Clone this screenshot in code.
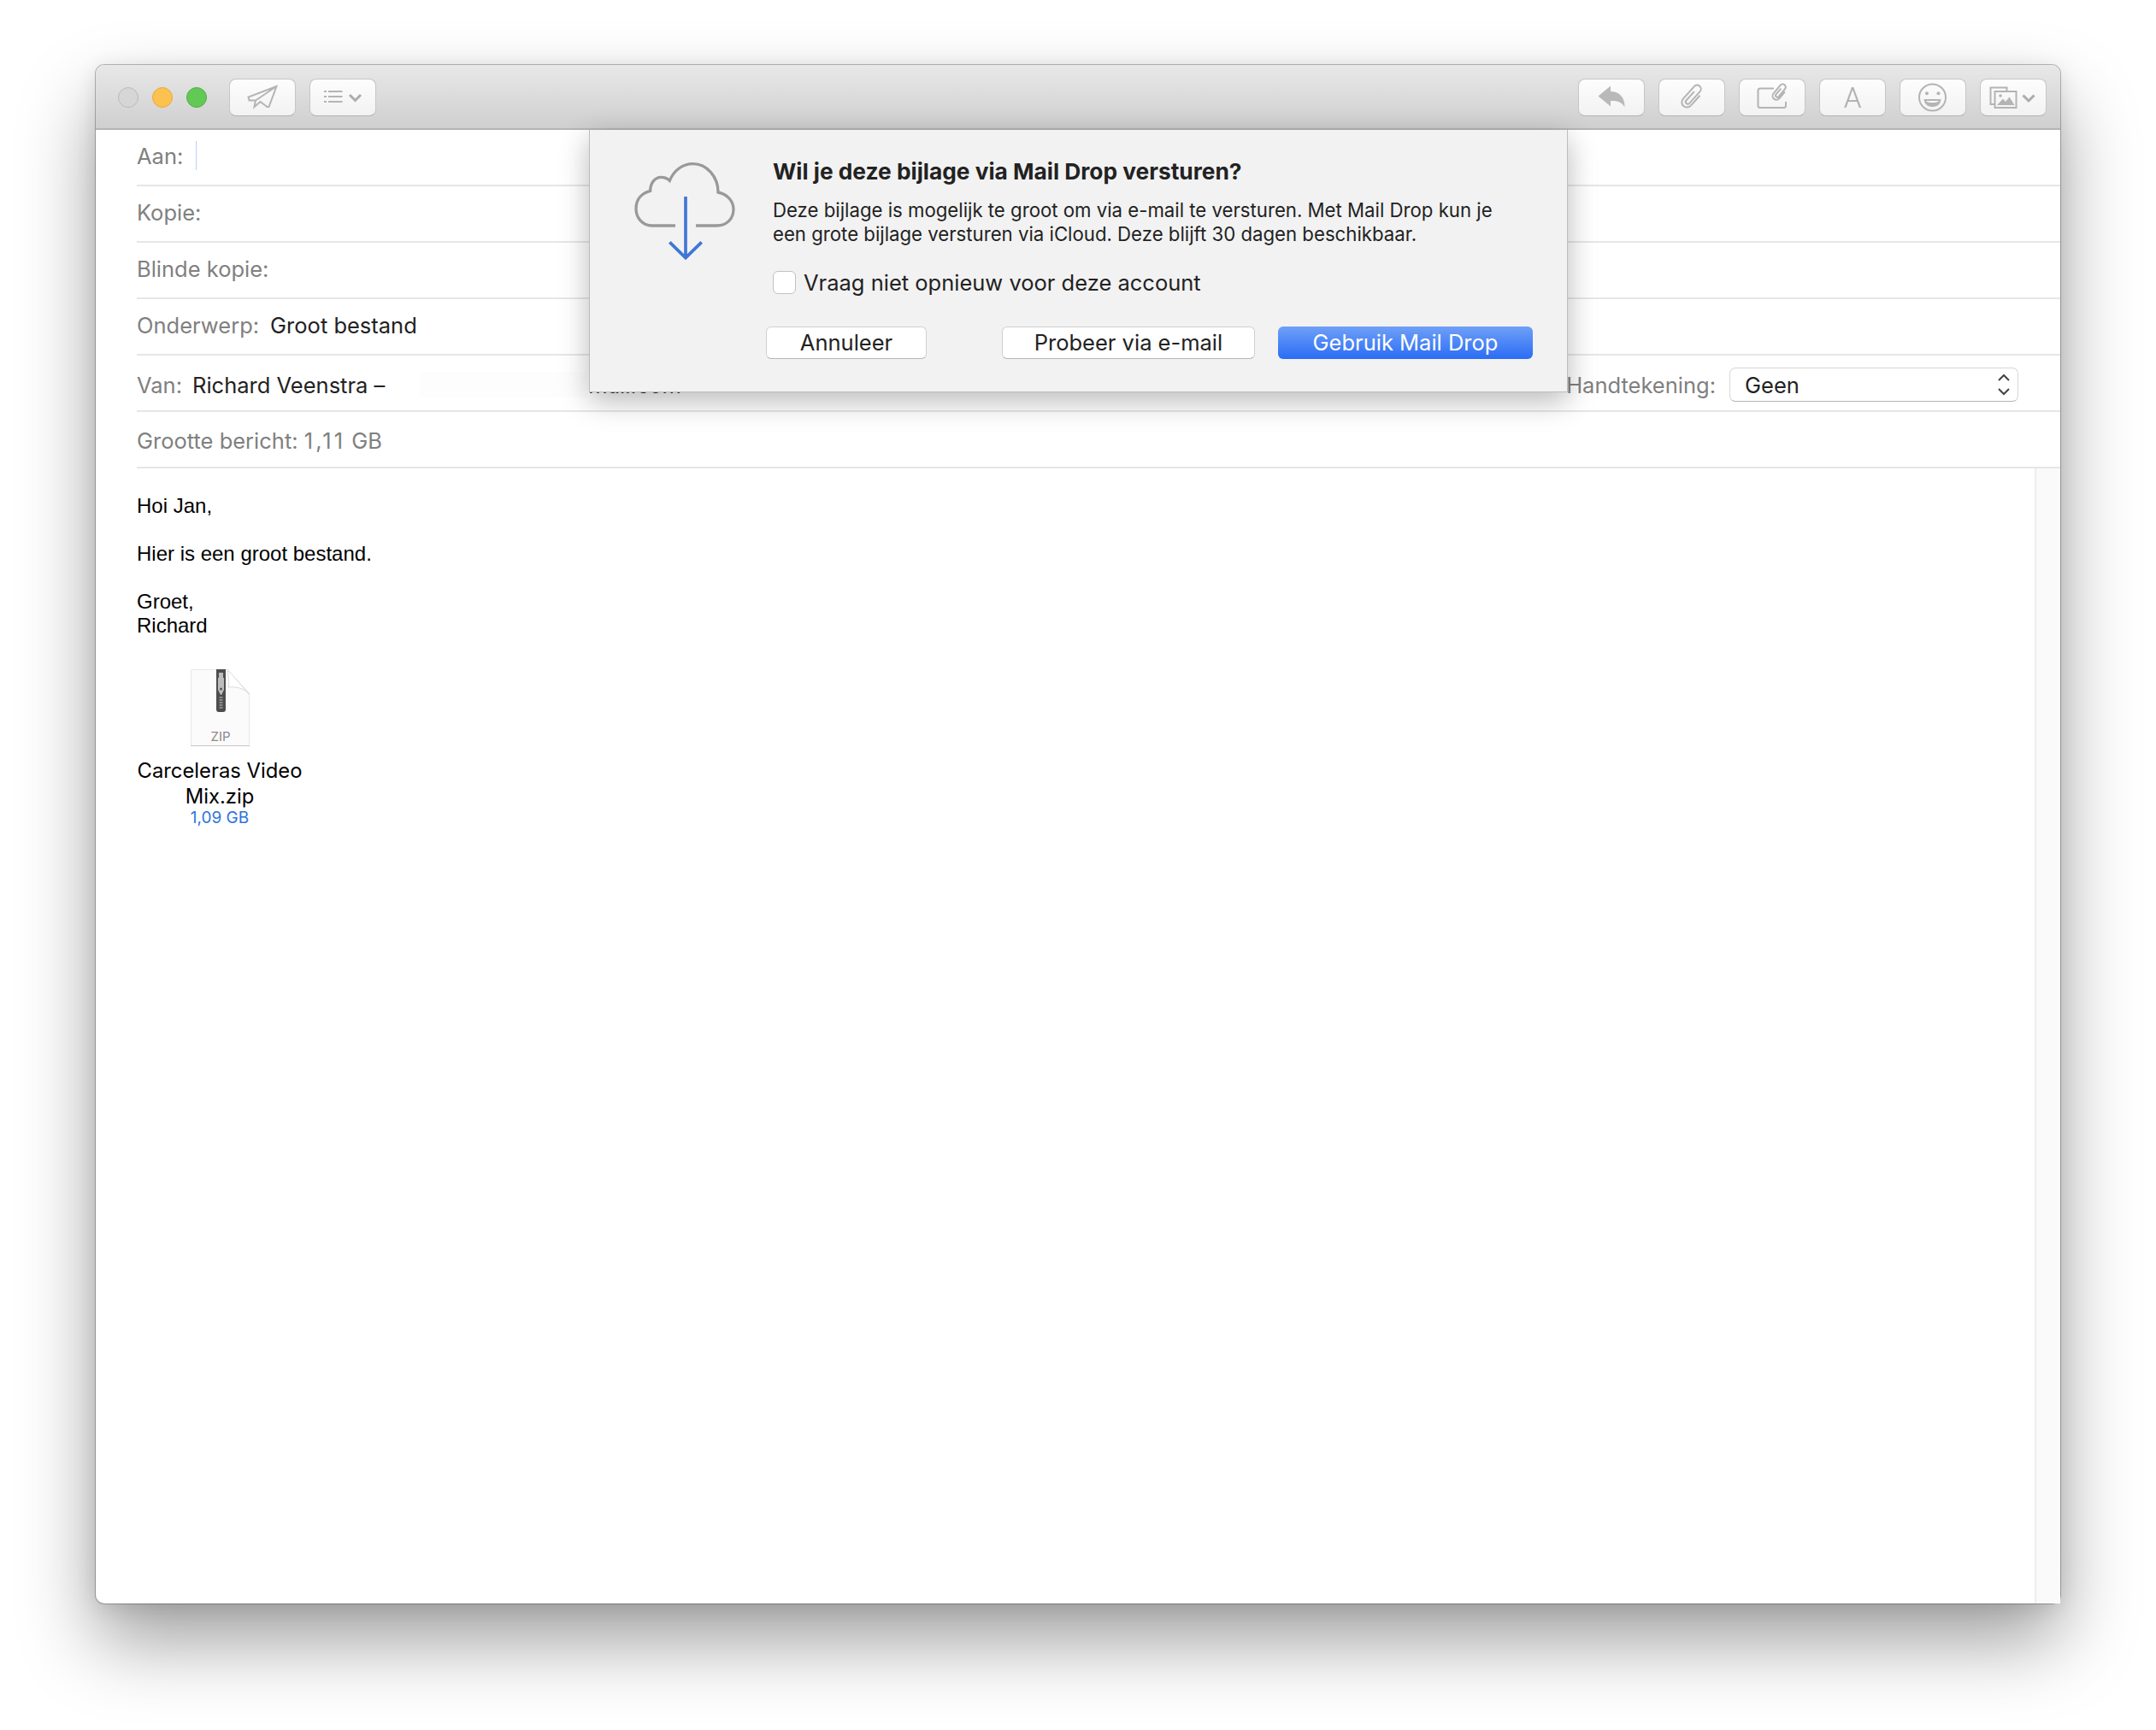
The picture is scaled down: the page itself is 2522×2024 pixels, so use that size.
<div class="page">
  <div class="window">
    <header class="titlebar">
      <div class="lights">
        <span class="light grey"></span>
        <span class="light yellow"></span>
        <span class="light green"></span>
      </div>
      <button class="tool">
        <svg viewBox="0 0 78 44" class="line">
          <path d="M55.500 9 22.500 21.500 23.500 25.500H31L29.500 33 36.500 27 44.500 33H46.500ZM55.500 9 31 25.500" />
        </svg>
      </button>
      <button class="tool">
        <svg viewBox="0 0 78 44" class="line">
          <path d="M17 15h3M22 15h16.500M17 21h3M22 21h16.500M17 27h3M22 27h16.500" />
          <path d="M47 19l6.500 6.500 6.500-6.500" class="chev" />
        </svg>
      </button>
      <div class="spacer"></div>
      <button class="tool">
        <svg viewBox="0 0 78 44">
          <path d="M23.500 20.500 38 8.500V15C48 15 55 22 54.500 33.500 51 27 46 25.500 38 26V32.500Z" fill="#b9b9b9" />
        </svg>
      </button>
      <button class="tool">
        <svg viewBox="0 0 78 44" class="line">
          <path transform="rotate(42 39 22)" d="M36.500 15V29a2.500 2.500 0 0 0 5 0V10.500a4.500 4.500 0 0 0-9 0V30a6 6 0 0 0 12 0V14" />
        </svg>
      </button>
      <button class="tool">
        <svg viewBox="0 0 78 44" class="line">
          <path d="M41 11.500H25a2.500 2.500 0 0 0-2.500 2.500V31.500a2.500 2.500 0 0 0 2.500 2.500H52.500a2.500 2.500 0 0 0 2.500-2.500V27" />
          <path transform="rotate(40 48 17)" d="M45.500 12V21a2 2 0 0 0 4 0V9.500a3.500 3.500 0 0 0-7 0V22a4.500 4.500 0 0 0 9 0V12" />
        </svg>
      </button>
      <button class="tool"><span class="glyph">A</span></button>
      <button class="tool">
        <svg viewBox="0 0 78 44" class="line">
          <ellipse cx="38.500" cy="22" rx="15.500" ry="15.500" />
          <circle cx="32" cy="17.300" r="2" fill="#b4b4b4" />
          <circle cx="45.500" cy="17.300" r="2" fill="#b4b4b4" />
          <path class="solid" d="M28.500 24H48.500C48 30 44 33 38.500 33S29 30 28.500 24Z" />
          <path class="teeth" d="M31 26H46C45 27.500 42 28 38.500 28S32 27.500 31 26Z" />
        </svg>
      </button>
      <button class="tool">
        <svg viewBox="0 0 78 44" class="line">
          <path d="M17 30H12.500V10.500H31.500V15" />
          <rect x="17.500" y="15" width="25" height="19" />
          <circle cx="24" cy="20" r="1.800" fill="#b4b4b4" />
          <path class="solid" d="M20 31 27 23.500 30 27 34.500 21.500 40.500 31Z" />
          <path class="chev" d="M50.500 19.500l6.500 6.500 6.500-6.500" />
        </svg>
      </button>
    </header>

    <div class="fields">
      <div class="row">
        <span class="label">Aan:</span>
        <span class="caret"></span>
      </div>
      <div class="row"><span class="label">Kopie:</span></div>
      <div class="row"><span class="label">Blinde kopie:</span></div>
      <div class="row">
        <span class="label">Onderwerp:</span>
        <span class="value">Groot bestand</span>
      </div>
      <div class="row from">
        <span class="label">Van:</span>
        <span class="value">Richard Veenstra –</span>
        <span class="mask"></span>
        <span class="value tail">mail.com</span>
        <div class="signature">
          <span class="label">Handtekening:</span>
          <div class="select">
            <span class="value">Geen</span>
            <svg viewBox="0 0 16 32" width="16" height="32">
              <path d="M2 11 8 5l6 6M2 21l6 6 6-6" fill="none" stroke="#444" stroke-width="2" />
            </svg>
          </div>
        </div>
      </div>
      <div class="row size-row"><span class="label">Grootte bericht: <span class="num">1,11</span> GB</span></div>
    </div>

    <div class="content">
      <div class="message">
        <p>Hoi Jan,</p>
        <p>Hier is een groot bestand.</p>
        <p>Groet,<br />Richard</p>
        <div class="attachment">
          <svg class="file" viewBox="0 0 69 90" width="69" height="90">
            <path d="M.5.500H43L68.500 28V89.500H.5Z" fill="#fbfbfb" stroke="#e8e8e8" />
            <path d="M0 89h69v1H0Z" fill="#c6c6c6" />
            <path d="M30 0H41V47a3 3 0 0 1-3 3H33a3 3 0 0 1-3-3Z" fill="#4d4d4d" />
            <path d="M33 4H38V10H39V24L36 30H35L32 24V10H33Z" fill="#bdbdbd" />
            <circle cx="35.500" cy="23" r="1.500" fill="#555" />
            <path d="M33.500 33h4M33.500 36h4M33.500 39h4M33.500 42h4M33.500 45h4" stroke="#c8c8c8" stroke-width="1.200" />
            <path d="M43 0 69 30C64 22 52 20 44 21 45 19 45 8 43 0Z" fill="#fff" stroke="#dcdcdc" />
            <text x="35" y="84" text-anchor="middle" class="ziplabel">ZIP</text>
          </svg>
          <div class="name">Carceleras Video<br />Mix.zip</div>
          <div class="size">1,09 GB</div>
        </div>
      </div>
      <div class="scroller"></div>
    </div>

    <section class="dialog">
      <svg class="cloud" viewBox="0 0 480 450" width="160" height="150">
        <path d="M210 282H128C95 282 72 255 72 222 72 190 92 168 122 160 122 130 140 112 160 112 172 112 182 116 190 124 205 88 235 65 272 65 320 65 360 110 360 165 395 172 414 198 414 225 414 258 390 282 355 282H282" fill="none" stroke="#999" stroke-width="10" />
        <path d="M246 180V392M190 340l56 55 56-55" fill="none" stroke="#4076d6" stroke-width="11" />
      </svg>
      <div class="dialog-body">
        <h2>Wil je deze bijlage via Mail Drop versturen?</h2>
        <p class="desc">Deze bijlage is mogelijk te groot om via e-mail te versturen. Met Mail Drop kun je<br />een grote bijlage versturen via iCloud. Deze blijft 30 dagen beschikbaar.</p>
        <label class="check"><span class="box"></span>Vraag niet opnieuw voor deze account</label>
        <div class="actions">
          <button class="btn cancel">Annuleer</button>
          <button class="btn retry">Probeer via e-mail</button>
          <button class="btn primary">Gebruik Mail Drop</button>
        </div>
      </div>
    </section>
  </div>
</div>

<style>
  :global(body) {
    margin: 0;
    background: #fff;
  }

  .page {
    box-sizing: border-box;
    height: 2024px;
    padding: 76px 0 0 112px;
    overflow: hidden;
  }

  .window {
    position: relative;
    display: flex;
    flex-direction: column;
    box-sizing: border-box;
    width: 2298px;
    height: 1800px;
    background: #fff;
    border-radius: 10px;
    box-shadow: 0 0 0 1px rgba(0, 0, 0, 0.26), 0 4px 24px rgba(0, 0, 0, 0.1), 0 44px 88px rgba(0, 0, 0, 0.38);
    font-family: Inter, "Noto Sans", sans-serif;
    font-size: 25.5px;
    color: #222;
  }

  .titlebar {
    display: flex;
    align-items: center;
    gap: 16px;
    box-sizing: border-box;
    height: 76px;
    padding: 2px 16px 0 26px;
    border-radius: 10px 10px 0 0;
    border-bottom: 2px solid #b5b5b5;
    background: linear-gradient(#e8e8e8, #cfcfcf);
  }

  .lights {
    display: flex;
    gap: 16px;
    margin-right: 10px;
  }

  .light {
    box-sizing: border-box;
    width: 24px;
    height: 24px;
    border-radius: 50%;
    border: 1px solid;
  }

  .grey { background: #d6d6d6; border-color: #bbb; }
  .yellow { background: #fcc24f; border-color: #eaa93c; }
  .green { background: #62c956; border-color: #4fb044; }

  .spacer { flex: 1; }

  .tool {
    display: flex;
    align-items: center;
    justify-content: center;
    box-sizing: border-box;
    width: 78px;
    height: 44px;
    padding: 0;
    border: 1px solid #c6c6c6;
    border-bottom-color: #b2b2b2;
    border-radius: 8px;
    background: linear-gradient(#fdfdfd, #f2f2f2);
  }

  .tool svg {
    width: 78px;
    height: 44px;
    flex: none;
  }

  .line path, .line rect, .line ellipse {
    fill: none;
    stroke: #b4b4b4;
    stroke-width: 2;
  }

  .line path.chev {
    stroke: #acacac;
    stroke-width: 3;
  }

  .line path.solid {
    fill: #b4b4b4;
    stroke: none;
  }

  .line path.teeth {
    fill: #fafafa;
    stroke: none;
  }

  .glyph {
    font-family: Roboto, sans-serif;
    font-weight: 300;
    font-size: 33px;
    color: #adadad;
  }

  .row {
    display: flex;
    align-items: center;
    gap: 13px;
    box-sizing: border-box;
    height: 66px;
    margin-left: 48px;
    padding-bottom: 4px;
    border-bottom: 2px solid #e6e6e6;
  }

  .size-row { padding: 2px 0 0; }

  .label { color: #808080; }

  .num { letter-spacing: 3px; }

  .caret {
    width: 1px;
    height: 34px;
    background: #bcd0f2;
    margin-left: 2px;
  }

  .from { padding: 4px 0 0; gap: 12px; }

  .mask {
    width: 195px;
    height: 30px;
    margin-left: 29px;
    background: #fdfdfd;
  }

  .tail { margin-left: -10px; }

  .signature {
    display: flex;
    align-items: center;
    gap: 16px;
    margin-left: auto;
    padding-right: 49px;
  }

  .select {
    display: flex;
    align-items: center;
    justify-content: space-between;
    box-sizing: border-box;
    width: 338px;
    height: 40px;
    padding: 0 8px 0 17px;
    border: 1px solid #d6d6d6;
    border-bottom-color: #b5b5b5;
    border-radius: 7px;
    background: #fff;
  }

  .content {
    flex: 1;
    display: flex;
    min-height: 0;
  }

  .message {
    flex: 1;
    padding: 30px 0 0 48px;
    font-family: "Liberation Sans", Arial, sans-serif;
    font-size: 24px;
    line-height: 28px;
    color: #000;
  }

  .message p {
    margin: 0 0 28px;
  }

  .attachment {
    width: 194px;
    margin-top: 37px;
    text-align: center;
    font-family: Inter, sans-serif;
  }

  .file {
    display: block;
    margin: 0 auto 14px;
  }

  .ziplabel {
    font-family: Inter, sans-serif;
    font-size: 15px;
    fill: #8a8a8a;
  }

  .name {
    font-size: 23.8px;
    line-height: 30px;
    white-space: nowrap;
  }

  .size {
    font-size: 19px;
    line-height: 20px;
    color: #2f74dc;
  }

  .scroller {
    width: 28px;
    border-left: 2px solid #eee;
    background: #fafafa;
  }

  .dialog {
    position: absolute;
    top: 76px;
    left: 577px;
    display: flex;
    box-sizing: border-box;
    width: 1145px;
    height: 307px;
    padding: 32px 0 0 30px;
    background: #f2f2f2;
    border: 1px solid #bdbdbd;
    border-top: none;
    box-shadow: 0 10px 32px rgba(0, 0, 0, 0.28);
  }

  .cloud {
    flex: none;
    margin-top: -14px;
  }

  .dialog-body {
    margin-left: 24px;
    width: 889px;
  }

  h2 {
    margin: 0;
    font-size: 26.3px;
    line-height: 34px;
    font-weight: 700;
  }

  .desc {
    margin: 14px 0 0;
    font-size: 22.2px;
    line-height: 28px;
  }

  .check {
    display: flex;
    align-items: center;
    gap: 9px;
    height: 28px;
    margin-top: 28px;
  }

  .box {
    box-sizing: border-box;
    width: 27px;
    height: 27px;
    background: #fff;
    border: 1px solid #c2c2c2;
    border-radius: 6px;
  }

  .actions {
    display: flex;
    gap: 27px;
    margin: 38px 0 0 -8px;
  }

  .btn {
    box-sizing: border-box;
    height: 38px;
    padding: 0 0 2px;
    border: 1px solid #d0d0d0;
    border-bottom-color: #b5b5b5;
    border-radius: 6px;
    background: #fff;
    font: inherit;
    color: #222;
  }

  .cancel { width: 188px; margin-right: auto; }
  .retry { width: 296px; }
  .primary {
    width: 298px;
    border: none;
    color: #fff;
    background: linear-gradient(#6fa0f7, #2a6cf5);
  }
</style>
